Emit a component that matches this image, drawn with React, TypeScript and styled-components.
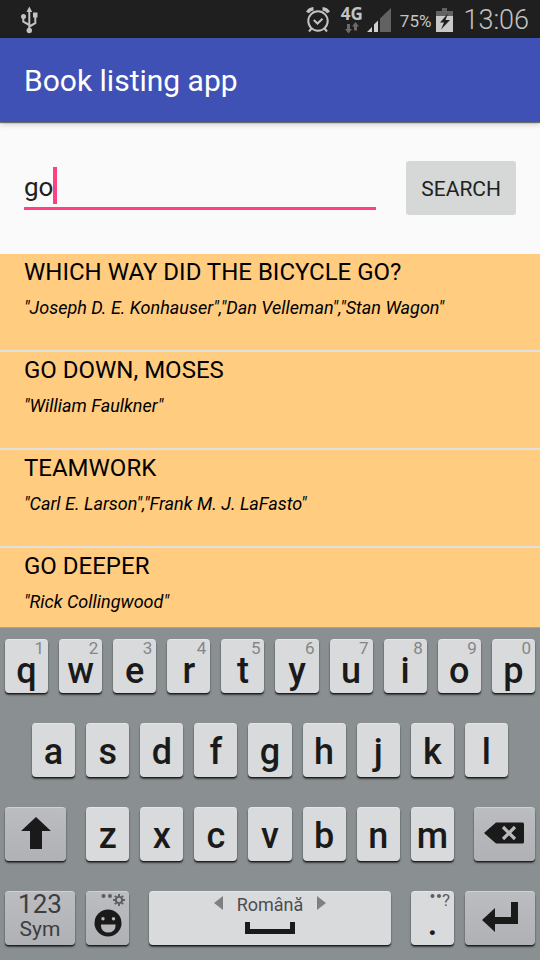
import React, { useState } from "react";
import styled, { createGlobalStyle } from "styled-components";

const GlobalStyle = createGlobalStyle`
  *, *::before, *::after { box-sizing: border-box; }
  body { margin: 0; font-family: Roboto, "Noto Sans", sans-serif; color: #000; background: #fafafa; }
  button, input { font: inherit; color: inherit; margin: 0; border: 0; }
  svg { display: block; flex: none; }
`;

const Page = styled.div`
  display: flex;
  flex-direction: column;
  height: 100vh;
  overflow: hidden;
`;

const StatusBar = styled.div`
  display: flex;
  justify-content: space-between;
  align-items: center;
  flex: none;
  height: 38px;
  padding: 2px 11px 0 20px;
  background: #1f1f1f;
  color: #c3c3c3;
`;

const StatusGroup = styled.div`
  display: flex;
  align-items: center;
`;

const Network = styled.div`
  display: flex;
  flex-direction: column;
  align-items: center;
  gap: 1px;
  margin: 0 4px 0 11px;
  font: 700 17px/14px "Noto Sans", sans-serif;
`;

const Battery = styled.span`
  margin: 2px 5px 0 9px;
  font-size: 17px;
  line-height: 24px;
`;

const Clock = styled.time`
  margin-left: 10px;
  font-size: 27px;
  line-height: 36px;
  font-weight: 300;
`;

const AppBar = styled.header`
  flex: none;
  padding: 23px 24px 21px;
  background: #3f51b5;
  color: #fff;
  box-shadow: 0 1px 1px rgba(0, 0, 0, 0.5), 0 2px 6px rgba(0, 0, 0, 0.2);
  z-index: 1;

  h1 {
    margin: 0;
    font-size: 30px;
    line-height: 40px;
    font-weight: 400;
  }
`;

const SearchForm = styled.form`
  display: flex;
  align-items: flex-start;
  gap: 30px;
  flex: none;
  padding: 39px 24px;
  background: #fafafa;
`;

const Field = styled.label`
  display: flex;
  align-items: center;
  flex: 1;
  min-width: 0;
  height: 49px;
  padding-top: 3px;
  border-bottom: 3px solid #ff4081;
  cursor: text;
`;

const FieldInput = styled.input`
  field-sizing: content;
  min-width: 1px;
  max-width: 100%;
  padding: 2px 0 0;
  outline: 0;
  background: transparent;
  caret-color: transparent;
  color: #212121;
  font-size: 26px;
  line-height: 36px;
`;

const Caret = styled.span`
  width: 4px;
  height: 37px;
  background: #ff4081;
`;

const SearchButton = styled.button`
  height: 54px;
  padding: 2px 15px 0;
  border-radius: 3px;
  background: #d6d7d7;
  color: #212121;
  font-size: 21px;
  line-height: 24px;
`;

const BookList = styled.ul`
  flex: 1 1 0;
  min-height: 0;
  overflow: hidden;
  margin: 0;
  padding: 0;
  list-style: none;
  background: #ffcc80;
`;

const BookItem = styled.li`
  height: 98px;
  padding: 3px 24px 0;
  border-bottom: 2px solid #e2e0dc;
`;

const BookTitle = styled.h2`
  margin: 0;
  font-size: 24px;
  line-height: 30px;
  font-weight: 400;
`;

const Authors = styled.p`
  margin: 9px 0 0;
  font-size: 18px;
  line-height: 24px;
  font-style: italic;
`;

const Keyboard = styled.div`
  display: flex;
  flex-direction: column;
  gap: 30px;
  flex: none;
  padding: 11px 5px 15px;
  border-top: 1px solid #a5a596;
  background: #8a9091;
`;

const KeyRow = styled.div<{ $inset?: number }>`
  display: flex;
  gap: 11px;
  padding: 0 ${(p) => p.$inset ?? 0}px;
`;

const KeyGroup = styled.div<{ $weight: number }>`
  display: flex;
  gap: 11px;
  flex: ${(p) => p.$weight} 1 0;
  margin: 0 9px;
`;

const Key = styled.button<{ $weight?: number; $dark?: boolean }>`
  position: relative;
  display: flex;
  flex-direction: column;
  align-items: center;
  justify-content: center;
  flex: ${(p) => p.$weight ?? 43} 1 0;
  min-width: 0;
  height: 54px;
  padding: 0 0 ${(p) => (p.$dark ? 2 : 0)}px;
  border-radius: 4px;
  background: ${(p) => (p.$dark ? "linear-gradient(#bcbdc0, #b0b1b5)" : "#d9dadc")};
  color: #1a1a1a;
  box-shadow: inset 0 1px 0 rgba(255, 255, 255, 0.3), 0 1px 0 #1d2020, 0 2px 2px rgba(0, 0, 0, 0.6);
`;

const Letter = styled.span<{ $low?: boolean }>`
  margin-top: ${(p) => (p.$low ? 10 : 4)}px;
  font-size: 36px;
  line-height: 44px;
  font-weight: 500;
`;

const Hint = styled.span<{ $strong?: boolean }>`
  position: absolute;
  top: 1px;
  right: 4px;
  display: flex;
  align-items: flex-start;
  font-size: 17px;
  line-height: 16px;
  color: ${(p) => (p.$strong ? "#5c5d60" : "#858687")};
`;

const EmojiKey = styled(Key)`
  padding-top: 10px;
  padding-bottom: 0;
`;

const SymKey = styled(Key)`
  padding-bottom: 4px;
  color: #3c3d3f;
  font-size: 26px;
  line-height: 26px;

  small {
    font-size: 21px;
    line-height: 24px;
  }
`;

const SpaceKey = styled(Key)`
  justify-content: flex-start;
  gap: 5px;
`;

const Language = styled.span`
  display: flex;
  align-items: flex-start;
  gap: 13px;
  margin-top: 2px;
  color: #4c4d4f;
  font-size: 18px;
  line-height: 24px;

  svg {
    margin-top: 3px;
  }
`;

const UsbIcon = () => (
  <svg width="18" height="28" viewBox="0 0 18 28" fill="none" stroke="#c3c3c3" strokeWidth="2" aria-label="USB">
    <path d="M9.300 5v18M9.300 20.500l6-3.300V10M9.300 19l-6-3.300V11" />
    <path d="M9.300 .5l2.900 5.500H6.500z" fill="#c3c3c3" stroke="none" />
    <circle cx="3.500" cy="10.500" r="2.500" fill="#c3c3c3" stroke="none" />
    <path d="M13 6.500h4.500v5H13z" fill="#c3c3c3" stroke="none" />
    <circle cx="9.300" cy="24.500" r="2.700" fill="#c3c3c3" stroke="none" />
  </svg>
);

const AlarmIcon = () => (
  <svg width="24" height="26" viewBox="0 0 24 26" fill="none" stroke="#c3c3c3" strokeWidth="2" aria-label="Alarm">
    <circle cx="12" cy="14" r="9.700" />
    <path d="M7.800 13l3.700 3.500 5-4.800M5.500 21.500l-2.500 3M18.500 21.500l2.500 3" />
    <path d="M1.500 5.500Q3.500 2 7.500 1.800M22.500 5.500Q20.500 2 16.500 1.800" strokeWidth="3.400" />
  </svg>
);

const DataArrows = () => (
  <svg width="14" height="12" viewBox="0 0 14 12" fill="#6b6b6b" aria-hidden="true">
    <path d="M2 2h3v5h2l-3.500 4.500L0 7h2z" />
    <path d="M9 8.500h3v-4h2L10.500 0 7 4.500h2z" />
  </svg>
);

const SignalIcon = () => (
  <svg width="24" height="24" viewBox="0 0 24 24" aria-label="Signal">
    <path d="M13 10.500L24 0v24H13z" fill="#626262" />
    <path d="M7 16.500l4-4V24H7zM0 24l5-5v5z" fill="#d0d0d0" />
  </svg>
);

const BatteryIcon = () => (
  <svg width="17" height="24" viewBox="0 0 17 24" aria-label="Charging">
    <path d="M0 3h6V0h5v3h6v5H0z" fill="#626262" />
    <path d="M0 8h17v16H0z" fill="#c9c9c9" />
    <path d="M12 5.500L4 14.500h4l-3 7 9-9.500H9.500z" fill="#1f1f1f" />
  </svg>
);

const ShiftIcon = () => (
  <svg width="30" height="32" viewBox="0 0 30 32" fill="#1a1a1a" aria-hidden="true">
    <path d="M15 0l15 14h-9v18H9V14H0z" />
  </svg>
);

const BackspaceIcon = () => (
  <svg width="40" height="22" viewBox="0 0 40 22" aria-hidden="true">
    <path d="M0 11L12 .5h27l1 1v19l-1 1H12z" fill="#1a1a1a" />
    <path d="M19 5l12 12M31 5L19 17" stroke="#b9babd" strokeWidth="3.200" />
  </svg>
);

const EnterIcon = () => (
  <svg width="36" height="30" viewBox="0 0 36 30" fill="#1a1a1a" aria-hidden="true">
    <path d="M0 18L13 6v9h16V0h7v22H13v8z" />
  </svg>
);

const SmileIcon = () => (
  <svg width="28" height="28" viewBox="0 0 28 28" aria-hidden="true">
    <circle cx="14" cy="14" r="13.500" fill="#1a1a1a" />
    <circle cx="9" cy="9.700" r="1.700" fill="#b7b8bb" />
    <circle cx="19.500" cy="9.700" r="1.700" fill="#b7b8bb" />
    <path d="M7 15.500h14.500v1.500a7.200 6.500 0 0 1-14.500 0z" fill="#b7b8bb" />
  </svg>
);

const Dots = () => (
  <svg width="12" height="8" viewBox="0 0 12 8" fill="#5c5d60" aria-hidden="true">
    <circle cx="2.500" cy="4" r="2" />
    <circle cx="9" cy="4" r="2" />
  </svg>
);

const GearIcon = () => (
  <svg width="12" height="14" viewBox="-6 -8 12 14" fill="none" stroke="#5c5d60" aria-hidden="true">
    <circle r="3.100" strokeWidth="1.900" />
    <path d="M0-6v2M0 4v2M-6 0h2M4 0h2M-4.200-4.200l1.400 1.400M2.800 2.800l1.400 1.400M4.200-4.200L2.800-2.800M-2.800 2.800l-1.400 1.400" strokeWidth="1.900" />
  </svg>
);

const Triangle = ({ flip }: { flip?: boolean }) => (
  <svg width="10" height="14" viewBox="0 0 10 14" fill="#7f8082" aria-hidden="true">
    <path d={flip ? "M1 0l9 7-9 7z" : "M9 0L0 7l9 7z"} />
  </svg>
);

const SpaceIcon = () => (
  <svg width="50" height="12" viewBox="0 0 50 12" fill="#1a1a1a" aria-hidden="true">
    <path d="M0 0h5v7h40V0h5v12H0z" />
  </svg>
);

const books = [
  { title: "WHICH WAY DID THE BICYCLE GO?", authors: '"Joseph D. E. Konhauser","Dan Velleman","Stan Wagon"' },
  { title: "GO DOWN, MOSES", authors: '"William Faulkner"' },
  { title: "TEAMWORK", authors: '"Carl E. Larson","Frank M. J. LaFasto"' },
  { title: "GO DEEPER", authors: '"Rick Collingwood"' },
];

export default function App() {
  const [query, setQuery] = useState("go");
  const type = (c: string) => setQuery((q) => q + c);

  const letterKeys = (letters: string, hints = "") =>
    letters.split("").map((c, i) => (
      <Key type="button" key={c} onClick={() => type(c)}>
        {hints[i] && <Hint>{hints[i]}</Hint>}
        <Letter $low={hints !== ""}>{c}</Letter>
      </Key>
    ));

  return (
    <Page>
      <GlobalStyle />
      <StatusBar>
        <UsbIcon />
        <StatusGroup>
          <AlarmIcon />
          <Network>
            4G
            <DataArrows />
          </Network>
          <SignalIcon />
          <Battery>75%</Battery>
          <BatteryIcon />
          <Clock>13:06</Clock>
        </StatusGroup>
      </StatusBar>
      <AppBar>
        <h1>Book listing app</h1>
      </AppBar>
      <SearchForm onSubmit={(e) => e.preventDefault()}>
        <Field>
          <FieldInput aria-label="Book title" value={query} onChange={(e) => setQuery(e.target.value)} />
          <Caret />
        </Field>
        <SearchButton type="submit">SEARCH</SearchButton>
      </SearchForm>
      <BookList>
        {books.map((b) => (
          <BookItem key={b.title}>
            <BookTitle>{b.title}</BookTitle>
            <Authors>{b.authors}</Authors>
          </BookItem>
        ))}
      </BookList>
      <Keyboard>
        <KeyRow>{letterKeys("qwertyuiop", "1234567890")}</KeyRow>
        <KeyRow $inset={27}>{letterKeys("asdfghjkl")}</KeyRow>
        <KeyRow>
          <Key type="button" $dark $weight={61} aria-label="Shift">
            <ShiftIcon />
          </Key>
          <KeyGroup $weight={367}>{letterKeys("zxcvbnm")}</KeyGroup>
          <Key type="button" $dark $weight={61} aria-label="Backspace" onClick={() => setQuery((q) => q.slice(0, -1))}>
            <BackspaceIcon />
          </Key>
        </KeyRow>
        <KeyRow>
          <SymKey type="button" $dark $weight={70}>
            123
            <small>Sym</small>
          </SymKey>
          <EmojiKey type="button" $dark aria-label="Emoji">
            <Hint $strong>
              <Dots />
              <GearIcon />
            </Hint>
            <SmileIcon />
          </EmojiKey>
          <KeyGroup $weight={242}>
            <SpaceKey type="button" onClick={() => type(" ")}>
              <Language>
                <Triangle />
                Română
                <Triangle flip />
              </Language>
              <SpaceIcon />
            </SpaceKey>
          </KeyGroup>
          <Key type="button" onClick={() => type(".")}>
            <Hint $strong>
              <Dots />?
            </Hint>
            <Letter $low>.</Letter>
          </Key>
          <Key type="button" $dark $weight={70} aria-label="Enter">
            <EnterIcon />
          </Key>
        </KeyRow>
      </Keyboard>
    </Page>
  );
}
